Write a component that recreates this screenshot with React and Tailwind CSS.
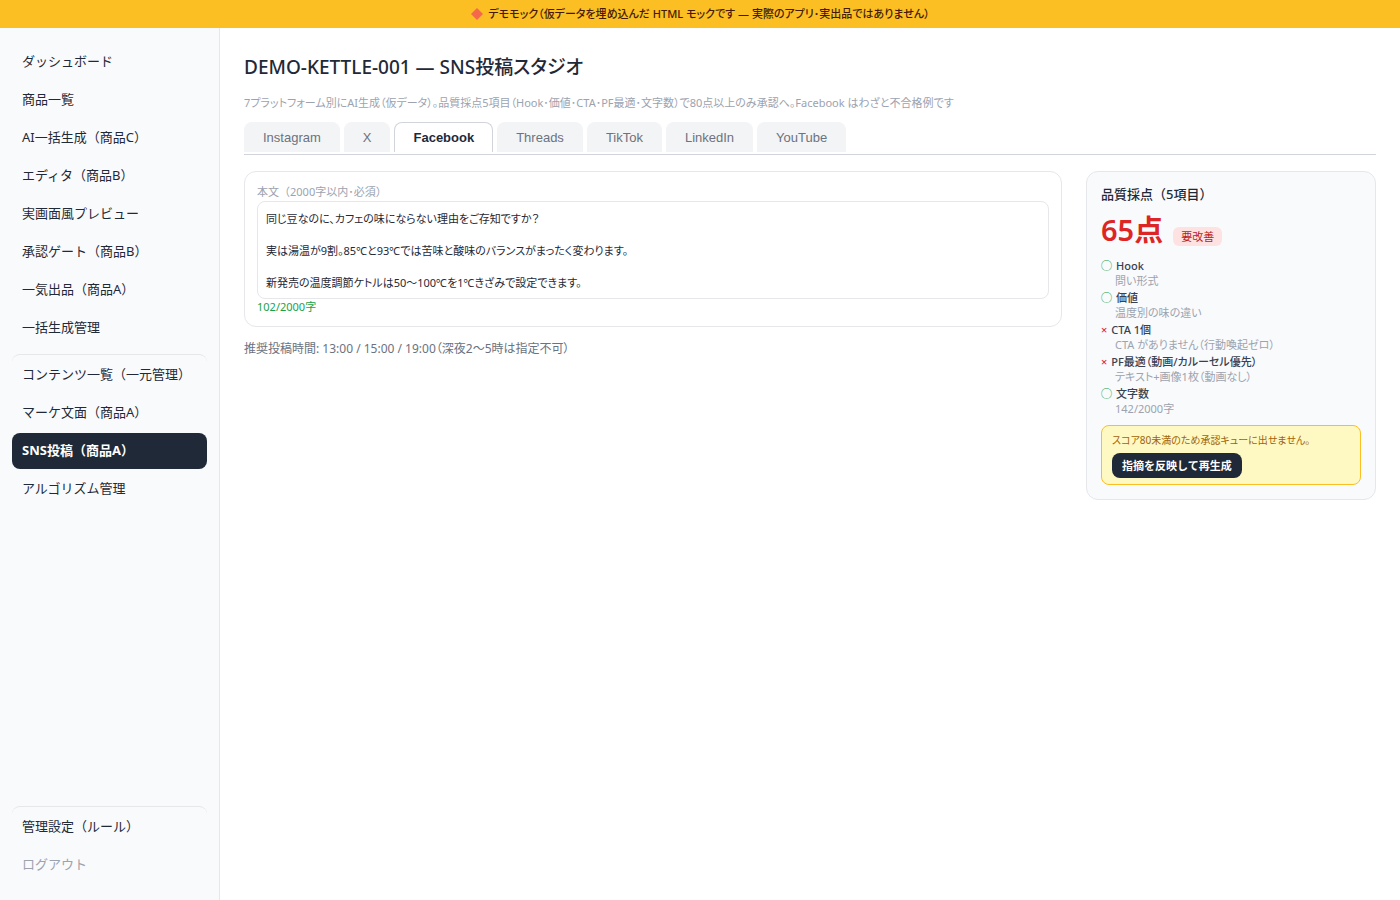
import { useState } from "react";
import clsx from "clsx";

const mainLinks = [
  "ダッシュボード",
  "商品一覧",
  "AI一括生成（商品C）",
  "エディタ（商品B）",
  "実画面風プレビュー",
  "承認ゲート（商品B）",
  "一気出品（商品A）",
  "一括生成管理",
];

const contentLinks = [
  "コンテンツ一覧（一元管理）",
  "マーケ文面（商品A）",
  "SNS投稿（商品A）",
  "アルゴリズム管理",
];

const platforms = ["Instagram", "X", "Facebook", "Threads", "TikTok", "LinkedIn", "YouTube"];

const checks = [
  { ok: true, name: "Hook", note: "問い形式" },
  { ok: true, name: "価値", note: "温度別の味の違い" },
  { ok: false, name: "CTA 1個", note: "CTA がありません（行動喚起ゼロ）" },
  { ok: false, name: "PF最適（動画/カルーセル優先）", note: "テキスト+画像1枚（動画なし）" },
  { ok: true, name: "文字数", note: "142/2000字" },
];

const body = `同じ豆なのに、カフェの味にならない理由をご存知ですか？

実は湯温が9割。85℃と93℃では苦味と酸味のバランスがまったく変わります。

新発売の温度調節ケトルは50〜100℃を1℃きざみで設定できます。`;

const NavItem = ({ label, active, divided, muted }) => (
  <a
    href="#"
    className={clsx(
      "block rounded-lg px-2.5 pb-[9px] text-[13px] leading-5",
      active && "bg-[#1f2937] font-bold text-white",
      muted && "text-[#9ca3af]",
      !active && !muted && "text-[#1f2937]",
      divided ? "border-t border-[#e5e7eb] pt-[9px]" : "pt-[7px]"
    )}
  >
    {label}
  </a>
);

const Sidebar = () => (
  <nav className="flex w-[220px] shrink-0 flex-col gap-0.5 border-r border-[#e5e7eb] bg-[#f9fafb] px-3 pt-4 pb-[17px] [font-feature-settings:normal]">
    {mainLinks.map((label) => (
      <NavItem key={label} label={label} />
    ))}
    <div className="mt-1.5 flex flex-col gap-0.5">
      {contentLinks.map((label, i) => (
        <NavItem key={label} label={label} divided={i === 0} active={label.startsWith("SNS")} />
      ))}
    </div>
    <div className="mt-auto flex flex-col gap-0.5">
      <NavItem label="管理設定（ルール）" divided />
      <NavItem label="ログアウト" muted />
    </div>
  </nav>
);

const Editor = () => {
  const [text, setText] = useState(body);
  return (
    <div className="min-w-0 flex-1">
      <div className="rounded-xl border border-[#e5e7eb] p-3">
        <label
          htmlFor="body"
          className="block pb-px text-[11px] leading-4 text-[#9ca3af] [font-feature-settings:normal]"
        >
          本文（2000字以内･必須）
        </label>
        <textarea
          id="body"
          rows={5}
          value={text}
          onChange={(e) => setText(e.target.value)}
          className="block w-full resize-none overflow-hidden rounded-lg border border-[#e5e7eb] bg-white px-2 pt-[9px] pb-[7px] text-[11px] leading-4 text-[#1f2937] outline-none"
        />
        <div className="text-[11px] leading-[15px] text-[#16a34a]">102/2000字</div>
      </div>
      <p className="mt-3.5 text-xs text-[#6b7280]">
        推奨投稿時間: 13:00 / 15:00 / 19:00（深夜2〜5時は指定不可）
      </p>
    </div>
  );
};

const ScoreCard = () => (
  <aside className="w-[290px] shrink-0 rounded-xl border border-[#e5e7eb] bg-[#f9fafb] p-3.5">
    <h2 className="text-[13px] leading-4 font-medium text-[#1f2937] [font-feature-settings:normal]">
      品質採点（5項目）
    </h2>
    <div className="flex items-baseline gap-2.5">
      <span className="text-[29px] leading-[56px] font-semibold text-[#dc2626]">65点</span>
      <span className="rounded-md bg-[#fee2e2] px-2 text-[11px] leading-[19px] text-[#b91c1c]">要改善</span>
    </div>
    <ul className="text-[11px]">
      {checks.map(({ ok, name, note }) => (
        <li key={name}>
          <div className="flex gap-1 leading-4 font-medium text-[#374151]">
            <span className={ok ? "font-bold text-[#16a34a]" : "text-[#dc2626]"}>{ok ? "◯" : "×"}</span>
            {name}
          </div>
          <div className="pb-0.5 pl-3.5 leading-[14px] text-[#9ca3af]">{note}</div>
        </li>
      ))}
    </ul>
    <div className="mt-[7px] rounded-lg border border-[#fbbf24] bg-[#fef9c3] px-2.5 py-1.5">
      <p className="text-[10px] leading-4 text-[#a16207]">スコア80未満のため承認キューに出せません。</p>
      <button className="mt-[5px] block rounded-lg bg-[#1f2937] px-2.5 text-[11px] leading-[25px] font-bold text-white [font-feature-settings:normal]">
        指摘を反映して再生成
      </button>
    </div>
  </aside>
);

const App = () => {
  const [tab, setTab] = useState("Facebook");

  return (
    <div className="flex min-h-screen flex-col bg-white font-['Noto_Sans','Noto_Sans_CJK_JP',sans-serif] text-[#1f2937] [font-feature-settings:'palt']">
      <div className="flex h-7 items-center justify-center gap-1 bg-[#fbbf24] text-[11px] font-medium text-[#451a03]">
        <svg viewBox="0 0 14 14" className="size-3.5" aria-hidden="true">
          <path d="M7 1 13 7 7 13 1 7Z" fill="#f4694c" />
        </svg>
        デモモック（仮データを埋め込んだ HTML モックです — 実際のアプリ･実出品ではありません）
      </div>
      <div className="flex flex-1">
        <Sidebar />
        <main className="min-w-0 flex-1 p-6">
          <h1 className="text-[19px] leading-[30px] font-medium">DEMO-KETTLE-001 — SNS投稿スタジオ</h1>
          <p className="mt-[13px] mb-[11px] text-[11px] leading-4 text-[#9ca3af]">
            7プラットフォーム別にAI生成（仮データ）。品質採点5項目（Hook･価値･CTA･PF最適･文字数）で80点以上のみ承認へ。Facebook はわざと不合格例です
          </p>
          <div className="mb-4 flex gap-1 border-b border-[#d1d5db] pb-0.5">
            {platforms.map((p) => (
              <button
                key={p}
                onClick={() => setTab(p)}
                className={clsx(
                  "h-[30px] rounded-t-lg border border-b-0 px-[18px] font-['Liberation_Sans',sans-serif] text-[13px]",
                  tab === p
                    ? "border-[#d1d5db] bg-white font-bold text-[#1f2937]"
                    : "border-[#f3f4f6] bg-[#f3f4f6] text-[#6b7280]"
                )}
              >
                {p}
              </button>
            ))}
          </div>
          <div className="flex items-start gap-6">
            <Editor />
            <ScoreCard />
          </div>
        </main>
      </div>
    </div>
  );
};

export default App;
